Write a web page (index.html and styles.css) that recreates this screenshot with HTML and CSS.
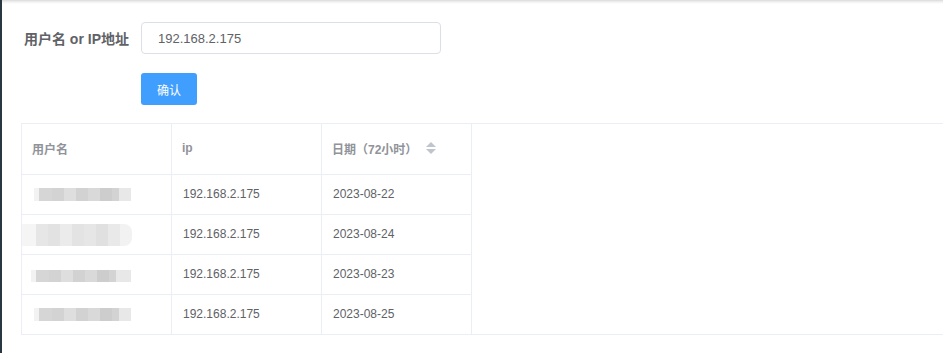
FILE: index.html
```html
<!DOCTYPE html>
<html lang="zh-CN">
<head>
<meta charset="utf-8">
<title>查询</title>
<link rel="stylesheet" href="styles.css">
</head>
<body>
<div class="page">
  <div class="topshadow"></div>
  <div class="content">
    <form class="form">
      <div class="form-row">
        <label class="form-label">用户名 or IP地址</label>
        <input class="form-input" type="text" value="192.168.2.175">
      </div>
      <div class="form-row">
        <span class="form-label"></span>
        <button type="button" class="btn">确认</button>
      </div>
    </form>
    <div class="table">
      <div class="trow thead">
        <div class="cell">用户名</div>
        <div class="cell">ip</div>
        <div class="cell">日期（72小时）<span class="sort"><i class="up"></i><i class="down"></i></span></div>
      </div>
      <div class="trow">
        <div class="cell"><span class="mask m1"></span></div>
        <div class="cell">192.168.2.175</div>
        <div class="cell">2023-08-22</div>
      </div>
      <div class="trow">
        <div class="cell"><span class="mask m2"></span></div>
        <div class="cell">192.168.2.175</div>
        <div class="cell">2023-08-24</div>
      </div>
      <div class="trow">
        <div class="cell"><span class="mask m3"></span></div>
        <div class="cell">192.168.2.175</div>
        <div class="cell">2023-08-23</div>
      </div>
      <div class="trow last">
        <div class="cell"><span class="mask m1"></span></div>
        <div class="cell">192.168.2.175</div>
        <div class="cell">2023-08-25</div>
      </div>
    </div>
  </div>
</div>
</body>
</html>
```
FILE: styles.css
```css
html, body {
  margin: 0;
  padding: 0;
  background: #fff;
  overflow: hidden;
}
body {
  font-family: "Liberation Sans", Arial, "Noto Sans CJK SC", sans-serif;
  color: #606266;
}
.page {
  border-left: 2px solid #2b3643;
  height: 353px;
  box-sizing: border-box;
}
.topshadow {
  height: 4px;
  background: linear-gradient(#d9d9d9, #f2f2f2 2px, #fff 4px);
}
.content {
  padding: 18px 0 0 19px;
}
.form-row {
  display: flex;
  align-items: center;
  height: 32px;
}
.form-row + .form-row {
  margin-top: 19px;
}
.form-label {
  width: 120px;
  box-sizing: border-box;
  padding-right: 12px;
  text-align: right;
  font-size: 14px;
  font-weight: bold;
  color: #606266;
}
.form-input {
  width: 300px;
  height: 32px;
  box-sizing: border-box;
  border: 1px solid #dcdfe6;
  border-radius: 4px;
  padding: 0 15px 0 16px;
  font-family: inherit;
  font-size: 13px;
  color: #606266;
  outline: none;
}
.btn {
  width: 56px;
  height: 32px;
  border: none;
  border-radius: 3px;
  background: #409eff;
  color: #fff;
  font-family: inherit;
  font-size: 12px;
  padding: 0;
}
.table {
  margin-top: 18px;
  border-top: 1px solid #ebeef5;
  border-left: 1px solid #ebeef5;
  border-bottom: 1px solid #ebeef5;
  font-size: 12px;
}
.trow {
  display: flex;
  width: 450px;
  height: 40px;
  box-sizing: border-box;
  border-bottom: 1px solid #ebeef5;
}
.trow.last {
  border-bottom: none;
  height: 39px;
}
.thead {
  height: 51px;
  color: #909399;
}
.cell {
  width: 150px;
  box-sizing: border-box;
  border-right: 1px solid #ebeef5;
  padding-left: 11px;
  padding-bottom: 1px;
  display: flex;
  align-items: center;
  color: #606266;
}
.thead .cell {
  padding-left: 10px;
  padding-bottom: 2px;
  color: #909399;
  font-weight: 600;
}
.sort {
  display: inline-flex;
  flex-direction: column;
  align-items: center;
  gap: 2px;
  margin-left: 9px;
}
.sort i {
  width: 0;
  height: 0;
  border-left: 5px solid transparent;
  border-right: 5px solid transparent;
}
.sort .up {
  border-bottom: 5px solid #c0c4cc;
}
.sort .down {
  border-top: 5px solid #c0c4cc;
}
.mask {
  display: block;
  height: 13px;
  width: 97px;
  margin-left: 1px;
  filter: blur(0.6px);
  background: linear-gradient(90deg,
    #f2f2f2 0, #f2f2f2 5px,
    #d6d6d6 5px, #d6d6d6 18px,
    #d3d3d3 18px, #d3d3d3 30px,
    #dedede 30px, #dedede 42px,
    #d2d2d2 42px, #d2d2d2 54px,
    #d9d9d9 54px, #d9d9d9 66px,
    #cdcdcd 66px, #cdcdcd 78px,
    #d3d3d3 78px, #d3d3d3 85px,
    #e8e8e8 85px, #e8e8e8 97px);
}
.m2 {
  height: 22px;
  width: 110px;
  margin-left: -11px;
  margin-top: 2px;
  border-radius: 0 8px 8px 0;
  background: linear-gradient(90deg,
    #f5f5f5 0, #f5f5f5 14px,
    #e6e6e6 14px, #e6e6e6 26px,
    #e2e2e2 26px, #e2e2e2 38px,
    #ebebeb 38px, #ebebeb 50px,
    #e3e3e3 50px, #e3e3e3 62px,
    #e6e6e6 62px, #e6e6e6 74px,
    #e0e0e0 74px, #e0e0e0 86px,
    #e9e9e9 86px, #e9e9e9 98px,
    #f2f2f2 98px, #f2f2f2 110px);
}
.m3 {
  height: 12px;
  margin-left: -2px;
  width: 100px;
  margin-top: 4px;
}
```
